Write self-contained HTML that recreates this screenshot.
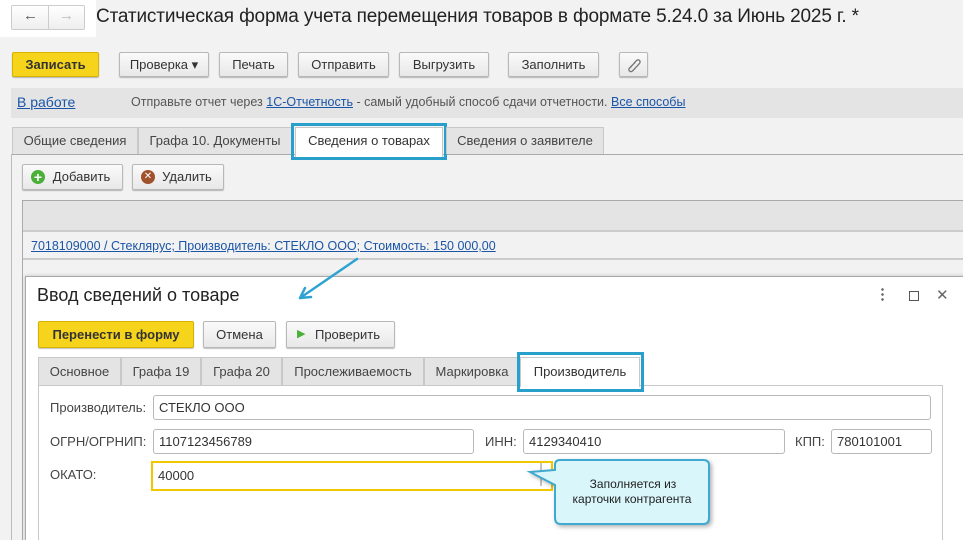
<!DOCTYPE html>
<html><head><meta charset="utf-8"><style>
*{box-sizing:border-box;margin:0;padding:0}
html,body{width:963px;height:540px;overflow:hidden}
body{background:#f2f2f2;font-family:"Liberation Sans",Arial,sans-serif;font-size:13px;color:#333;position:relative}
.a{position:absolute}
.btn{position:absolute;border:1px solid #b8b8b8;border-radius:2px;background:linear-gradient(#fafafa,#e8e8e8);box-shadow:0 1px 1px rgba(0,0,0,.25);text-align:center;color:#333;font-size:13px}
.yel{background:#f7d41c;border-color:#d7b200;font-weight:bold;color:#333}
.tab{position:absolute;background:#e4e4e4;border:1px solid #c8c8c8;border-bottom:none;text-align:center;color:#444;font-size:13px}
.inp{position:absolute;background:#fff;border:1px solid #b8b8b8;border-radius:3px;font-size:13px;color:#333;padding-left:5px}
.lbl{position:absolute;font-size:13px;color:#444}
a{color:#1a55a8;text-decoration:underline}
</style></head><body>
<div class="a" style="left:0;top:0;width:96px;height:37px;background:#fff"></div>
<div class="a" style="left:11px;top:5px;width:74px;height:25px;border:1px solid #ccc;border-radius:2px;background:linear-gradient(#fff,#eee)"></div>
<div class="a" style="left:48px;top:6px;width:1px;height:23px;background:#ccc"></div>
<div class="a" style="left:23px;top:7px;font-size:15px;color:#555;font-weight:bold">←</div>
<div class="a" style="left:59px;top:7px;font-size:15px;color:#bbb;font-weight:bold">→</div>
<div class="a" style="left:96px;top:6px;font-size:19px;color:#222;letter-spacing:-0.15px">Статистическая форма учета перемещения товаров в формате 5.24.0 за Июнь 2025 г. *</div>

<div class="btn yel" style="left:12px;top:52px;width:87px;height:25px;line-height:23px">Записать</div>
<div class="btn" style="left:119px;top:52px;width:90px;height:25px;line-height:23px">Проверка ▾</div>
<div class="btn" style="left:219px;top:52px;width:69px;height:25px;line-height:23px">Печать</div>
<div class="btn" style="left:298px;top:52px;width:91px;height:25px;line-height:23px">Отправить</div>
<div class="btn" style="left:399px;top:52px;width:90px;height:25px;line-height:23px">Выгрузить</div>
<div class="btn" style="left:508px;top:52px;width:91px;height:25px;line-height:23px">Заполнить</div>
<div class="btn" style="left:619px;top:52px;width:29px;height:25px"><svg width="27" height="23"><path d="M10 15 L16 8 Q18 6 19.5 7.5 Q21 9 19 11 L13 17.5 Q11 19.5 9.5 18 Q8 16.5 10 14.5 L15.5 9" stroke="#777" stroke-width="1.3" fill="none"/></svg></div>

<div class="a" style="left:11px;top:88px;width:952px;height:30px;background:#e4e4e4"></div>
<div class="a" style="left:17px;top:94px;font-size:14px"><a>В работе</a></div>
<div class="a" style="left:131px;top:95px;font-size:12.5px;color:#555">Отправьте отчет через <a>1С-Отчетность</a> - самый удобный способ сдачи отчетности. <a>Все способы</a></div>

<div class="a" style="left:11px;top:154px;width:952px;height:1px;background:#aaa"></div>
<div class="a" style="left:11px;top:154px;width:1px;height:386px;background:#bbb"></div>
<div class="tab" style="left:12px;top:127px;width:126px;height:27px;line-height:26px">Общие сведения</div>
<div class="tab" style="left:138px;top:127px;width:154px;height:27px;line-height:26px">Графа 10. Документы</div>
<div class="tab" style="left:295px;top:127px;width:148px;height:30px;line-height:26px;background:#fff;color:#333">Сведения о товарах</div>
<div class="a" style="left:291px;top:123px;width:156px;height:37px;border:3px solid #29a0cc"></div>
<div class="tab" style="left:446px;top:127px;width:158px;height:27px;line-height:26px">Сведения о заявителе</div>

<div class="btn" style="left:22px;top:164px;width:101px;height:26px;line-height:24px;padding-left:18px"><span class="a" style="left:8px;top:5px;width:14px;height:14px;border-radius:50%;background:#4caf3a;color:#fff;font-weight:bold;line-height:14px;font-size:14px">+</span>Добавить</div>
<div class="btn" style="left:132px;top:164px;width:92px;height:26px;line-height:24px;padding-left:18px"><span class="a" style="left:8px;top:5px;width:14px;height:14px;border-radius:50%;background:#a0522d;color:#fff;line-height:14px;font-size:10px">✕</span>Удалить</div>

<div class="a" style="left:22px;top:200px;width:941px;height:340px;border-left:1px solid #aaa;border-top:1px solid #aaa;background:#f2f2f2"></div>
<div class="a" style="left:23px;top:201px;width:940px;height:31px;background:#e4e4e4;border-bottom:2px solid #ccc"></div>
<div class="a" style="left:31px;top:239px;font-size:12.5px"><a>7018109000 / Стеклярус; Производитель: СТЕКЛО ООО; Стоимость: 150 000,00</a></div>
<div class="a" style="left:23px;top:258px;width:940px;height:2px;background:#ccc"></div>

<div class="a" style="left:25px;top:276px;width:945px;height:270px;background:#fff;border:1px solid #aaa;box-shadow:0 0 4px rgba(0,0,0,.2)"></div>
<div class="a" style="left:37px;top:285px;font-size:18px;color:#222">Ввод сведений о товаре</div>
<div class="a" style="left:881px;top:287px;width:3px;height:14px;background:radial-gradient(circle,#666 1.2px,transparent 1.4px) 0 0/3px 5px"></div>
<div class="a" style="left:909px;top:291px;width:10px;height:10px;border:1px solid #555"></div>
<div class="a" style="left:936px;top:286px;font-size:15px;color:#666">✕</div>

<div class="btn yel" style="left:38px;top:321px;width:156px;height:27px;line-height:25px">Перенести в форму</div>
<div class="btn" style="left:203px;top:321px;width:73px;height:27px;line-height:25px">Отмена</div>
<div class="btn" style="left:286px;top:321px;width:109px;height:27px;line-height:25px;padding-left:14px"><span style="color:#4caf3a;font-size:11px;position:absolute;left:10px">▶</span>Проверить</div>

<div class="a" style="left:38px;top:385px;width:905px;height:160px;border:1px solid #c8c8c8"></div>
<div class="tab" style="left:38px;top:357px;width:83px;height:28px;line-height:27px">Основное</div>
<div class="tab" style="left:121px;top:357px;width:80px;height:28px;line-height:27px">Графа 19</div>
<div class="tab" style="left:201px;top:357px;width:81px;height:28px;line-height:27px">Графа 20</div>
<div class="tab" style="left:282px;top:357px;width:142px;height:28px;line-height:27px">Прослеживаемость</div>
<div class="tab" style="left:424px;top:357px;width:96px;height:28px;line-height:27px">Маркировка</div>
<div class="tab" style="left:520px;top:357px;width:120px;height:30px;line-height:27px;background:#fff;color:#333">Производитель</div>
<div class="a" style="left:517px;top:352px;width:127px;height:40px;border:3px solid #29a0cc"></div>

<div class="lbl" style="left:50px;top:400px">Производитель:</div>
<div class="inp" style="left:153px;top:395px;width:778px;height:25px;line-height:23px">СТЕКЛО ООО</div>
<div class="lbl" style="left:50px;top:434px">ОГРН/ОГРНИП:</div>
<div class="inp" style="left:153px;top:429px;width:321px;height:25px;line-height:23px">1107123456789</div>
<div class="lbl" style="left:485px;top:434px">ИНН:</div>
<div class="inp" style="left:523px;top:429px;width:262px;height:25px;line-height:23px">4129340410</div>
<div class="lbl" style="left:795px;top:434px">КПП:</div>
<div class="inp" style="left:831px;top:429px;width:101px;height:25px;line-height:23px">780101001</div>
<div class="lbl" style="left:50px;top:467px">ОКАТО:</div>
<div class="inp" style="left:151px;top:461px;width:402px;height:30px;line-height:26px;border:2px solid #f0c800;border-radius:0">40000</div>

<svg class="a" style="left:0;top:0" width="963" height="540">
<path d="M357 259 L300 298 M300 298 L305 288 M300 298 L311 297" stroke="#2ea3d0" stroke-width="2.5" fill="none" stroke-linecap="round"/>
<line x1="541" y1="463" x2="541" y2="486" stroke="#888" stroke-width="1"/>
<path d="M560 460 Q555 460 555 465 L555 470 L530 472 L555 485 L555 518 Q555 524 561 524 L703 524 Q709 524 709 518 L709 465 Q709 460 703 460 Z" fill="#d9f6fb" stroke="#3fa9cf" stroke-width="2" filter="drop-shadow(2px 2px 2px rgba(0,0,0,.3))"/>
<text x="633" y="488" font-family="Liberation Sans,sans-serif" font-size="12" fill="#222" text-anchor="middle">Заполняется из</text>
<text x="632" y="503" font-family="Liberation Sans,sans-serif" font-size="12" fill="#222" text-anchor="middle">карточки контрагента</text>
</svg>
</body></html>
